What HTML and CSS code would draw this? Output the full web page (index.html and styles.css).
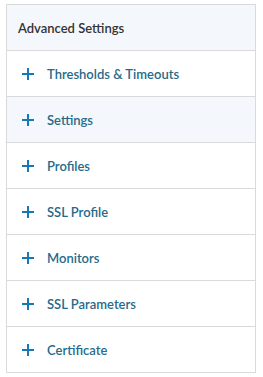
FILE: index.html
```html
<!DOCTYPE html>
<html lang="en">
<head>
    <meta charset="UTF-8">
    <title>Advanced Settings</title>
    <link rel="stylesheet" href="styles.css">
</head>
<body>

<div class="panel">
    <div class="panel-header">Advanced Settings</div>
    <div class="panel-row"><span class="plus"></span>Thresholds &amp; Timeouts</div>
    <div class="panel-row hover"><span class="plus"></span>Settings</div>
    <div class="panel-row"><span class="plus"></span>Profiles</div>
    <div class="panel-row"><span class="plus"></span>SSL Profile</div>
    <div class="panel-row"><span class="plus"></span>Monitors</div>
    <div class="panel-row"><span class="plus"></span>SSL Parameters</div>
    <div class="panel-row"><span class="plus"></span>Certificate</div>
</div>

</body>
</html>
```
FILE: styles.css
```css
body {
    margin: 0;
    padding: 4px 7px 0 6px;
    font-family: Lato, "Open Sans", sans-serif;
    background: #fff;
}

.panel {
    border: 1px solid #dadada;
    border-bottom: none;
}

.panel-header {
    height: 45px;
    display: flex;
    align-items: center;
    padding-left: 11px;
    background-color: #f4f7fb;
    border-bottom: 1px solid #dadada;
    color: #333;
    font-size: 13px;
    font-weight: 600;
}

.panel-row {
    height: 45px;
    display: flex;
    align-items: center;
    padding-left: 15px;
    border-bottom: 1px solid #dadada;
    color: #276a8a;
    font-size: 13px;
    font-weight: 600;
}

.panel-row.hover {
    background-color: #f4f7fb;
}

/* Plus sign */
.plus {
    position: relative;
    width: 12px;
    height: 12px;
    margin-right: 13px;
}
.plus::before, .plus::after {
    content: "";
    position: absolute;
    background: #1778b8;
}
.plus::before {
    left: 0; right: 0; top: 5px;
    height: 2px;
}
.plus::after {
    top: 0; bottom: 0; left: 5px;
    width: 2px;
}
```
